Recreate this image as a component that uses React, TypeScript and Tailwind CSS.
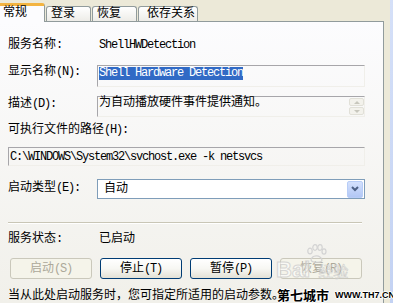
const font = "font-['Liberation_Mono','Noto_Sans_CJK_SC',monospace]";

function A({ children }: { children: React.ReactNode }) {
  return <span className="tracking-[-1.2px]">{children}</span>;
}

function Label({ zh, en, className = '' }: { zh: string; en?: string; className?: string }) {
  return (
    <div className={`w-[89px] shrink-0 whitespace-nowrap ${className}`}>
      {zh}
      {en && <A>{en}</A>}
    </div>
  );
}

function Tab({ text, width, pl, active }: { text: string; width: string; pl: string; active?: boolean }) {
  if (active) {
    return (
      <div
        className={`relative z-10 ${width} h-[19px] ${pl} bg-[#fcfcfe] border-r border-[#919b9c] border-t-[3px] border-t-[#f3b441] rounded-tr-[3px] leading-[15px] whitespace-nowrap`}
      >
        {text}
      </div>
    );
  }
  return (
    <div
      className={`${width} h-[16px] ml-px ${pl} bg-gradient-to-b from-white to-[#ecebe6] border border-b-0 border-[#919b9c] rounded-t-[3px] leading-[15px] whitespace-nowrap`}
    >
      {text}
    </div>
  );
}

function Button({ zh, en, disabled }: { zh: string; en: string; disabled?: boolean }) {
  return (
    <div
      className={
        disabled
          ? 'w-[82px] h-[21px] flex items-center justify-center rounded-[3px] border border-[#cac8bb] bg-[#f5f4ea] text-[#aca899]'
          : 'w-[82px] h-[21px] flex items-center justify-center rounded-[3px] border border-[#003c74] bg-gradient-to-b from-white via-[#f7f7f3] to-[#e3e1d6]'
      }
    >
      {zh}
      <A>{en}</A>
    </div>
  );
}

export default function App() {
  return (
    <div className={`relative w-[393px] h-[303px] overflow-hidden bg-[#ece9d8] flex text-[12px] leading-[14px] text-black ${font}`}>
      <div className="w-[390px] flex flex-col">
        {/* tabs */}
        <div className="h-[23px] flex items-end">
          <Tab text="常规" width="w-[45px]" pl="pl-[3px]" active />
          <Tab text="登录" width="w-[45px]" pl="pl-[4px]" />
          <Tab text="恢复" width="w-[45px]" pl="pl-[4px]" />
          <Tab text="依存关系" width="w-[60px]" pl="pl-[8px]" />
        </div>

        {/* panel */}
        <div className="w-[384px] flex-1 -mt-px border-t border-r border-[#919b9c] bg-gradient-to-b from-[#fcfcfe] to-[#f1f0ea] flex flex-col pl-[8px]">
          <div className="mt-[16px] flex h-[14px]">
            <Label zh="服务名称" en=":" />
            <div className="pl-[2px]">
              <A>ShellHWDetection</A>
            </div>
          </div>

          <div className="mt-[13px] flex">
            <Label zh="显示名称" en="(N):" />
            <div className="w-[268px] h-[22px] border border-[#a7a6aa] border-b-[#f0efea] border-r-[#f0efea] pl-px">
              <span className="inline-block h-[13px] leading-[13px] bg-[#316ac5] text-white">
                <A>Shell Hardware Detection</A>
              </span>
            </div>
          </div>

          <div className="mt-[9px] flex">
            <Label zh="描述" en="(D):" className="pt-px" />
            <div className="w-[268px] h-[21px] border border-[#a7a6aa] border-b-[#f0efea] border-r-[#f0efea] flex">
              <div className="flex-1 pl-px leading-[13px]">为自动播放硬件事件提供通知。</div>
              <div className="w-[15px] flex flex-col gap-px py-px">
                <div className="flex-1 rounded-[2px] border border-[#e1e0d8] bg-[#f3f2ec] flex items-center justify-center">
                  <div className="w-0 h-0 border-x-[3px] border-x-transparent border-b-[3px] border-b-[#c8c7bd]" />
                </div>
                <div className="flex-1 rounded-[2px] border border-[#e1e0d8] bg-[#f3f2ec] flex items-center justify-center">
                  <div className="w-0 h-0 border-x-[3px] border-x-transparent border-t-[3px] border-t-[#c8c7bd]" />
                </div>
              </div>
            </div>
          </div>

          <div className="mt-[6px] h-[14px]">
            可执行文件的路径<A>(H):</A>
          </div>

          <div className="mt-[10px] w-[357px] h-[19px] border border-[#a7a6aa] border-b-[#f0efea] border-r-[#f0efea] pl-[1px] flex items-center">
            <A>{'C:\\WINDOWS\\System32\\svchost.exe -k netsvcs'}</A>
          </div>

          <div className="mt-[13px] flex">
            <Label zh="启动类型" en="(E):" className="pt-[2px]" />
            <div className="w-[268px] h-[20px] border border-[#7f9db9] bg-white flex items-center">
              <div className="flex-1 pl-[6px]">自动</div>
              <div className="w-[16px] h-[17px] mr-px rounded-[2px] border border-[#b8cdf7] bg-gradient-to-b from-[#d4e1fd] to-[#b2c7f5] flex items-center justify-center">
                <svg width="8" height="6" viewBox="0 0 8 6">
                  <path d="M1 1 L4 4 L7 1" fill="none" stroke="#4d6185" strokeWidth="2" />
                </svg>
              </div>
            </div>
          </div>

          <div className="mt-[23px] w-[354px] border-t border-[#c9c6b6] border-b border-b-white" />

          <div className="mt-[8px] flex h-[14px]">
            <Label zh="服务状态" en=":" />
            <div className="pl-[2px]">已启动</div>
          </div>

          <div className="mt-[12px] pl-[2px] flex gap-[8px]">
            <Button zh="启动" en="(S)" disabled />
            <Button zh="停止" en="(T)" />
            <Button zh="暂停" en="(P)" />
            <Button zh="恢复" en="(R)" disabled />
          </div>

          <div className="mt-[10px] whitespace-nowrap">
            当从此处启动服务时，您可指定所适用的启动参数。
          </div>
        </div>
      </div>
      <div className="w-[3px] bg-gradient-to-b from-[#d5e0f8] to-[#c3d2f3]" />

      {/* watermarks */}
      <div className="absolute left-[276px] top-[259px] flex items-end opacity-80 pointer-events-none">
        <span className="font-['Liberation_Sans',sans-serif] font-bold text-[22px] leading-[22px] text-white/70 [-webkit-text-stroke:1px_#cfcfcf]">
          Bai
        </span>
        <span className="ml-[8px] font-['Noto_Sans_CJK_SC',sans-serif] text-[15px] leading-[20px] text-white/60 [-webkit-text-stroke:0.6px_#c8c8c8]">
          经验
        </span>
      </div>
      <svg className="absolute left-[305px] top-[244px] pointer-events-none" width="22" height="20" viewBox="0 0 22 20">
        <g fill="none" stroke="#d3d3d3" strokeWidth="1.2">
          <ellipse cx="5" cy="7" rx="2.2" ry="2.8" />
          <ellipse cx="10" cy="3.5" rx="2.2" ry="2.8" />
          <ellipse cx="15" cy="3.5" rx="2.2" ry="2.8" />
          <ellipse cx="19" cy="7.5" rx="2" ry="2.6" />
          <path d="M6 16 C7 11 15 10 17 16 C17 19 7 19 6 16 Z" />
        </g>
      </svg>
      <div className="absolute left-[277px] top-[287px] font-['Noto_Sans_CJK_SC',sans-serif] font-bold text-[13px] leading-[16px] text-black [text-shadow:1px_0_#fff,-1px_0_#fff,0_1px_#fff,0_-1px_#fff] whitespace-nowrap">
        第七城市
      </div>
      <div className="absolute left-[335px] top-[290px] font-['Liberation_Sans',sans-serif] font-bold text-[9px] leading-[10px] text-black [text-shadow:1px_0_#fff,-1px_0_#fff,0_1px_#fff,0_-1px_#fff] whitespace-nowrap">
        WWW.TH7.CN
      </div>
    </div>
  );
}
